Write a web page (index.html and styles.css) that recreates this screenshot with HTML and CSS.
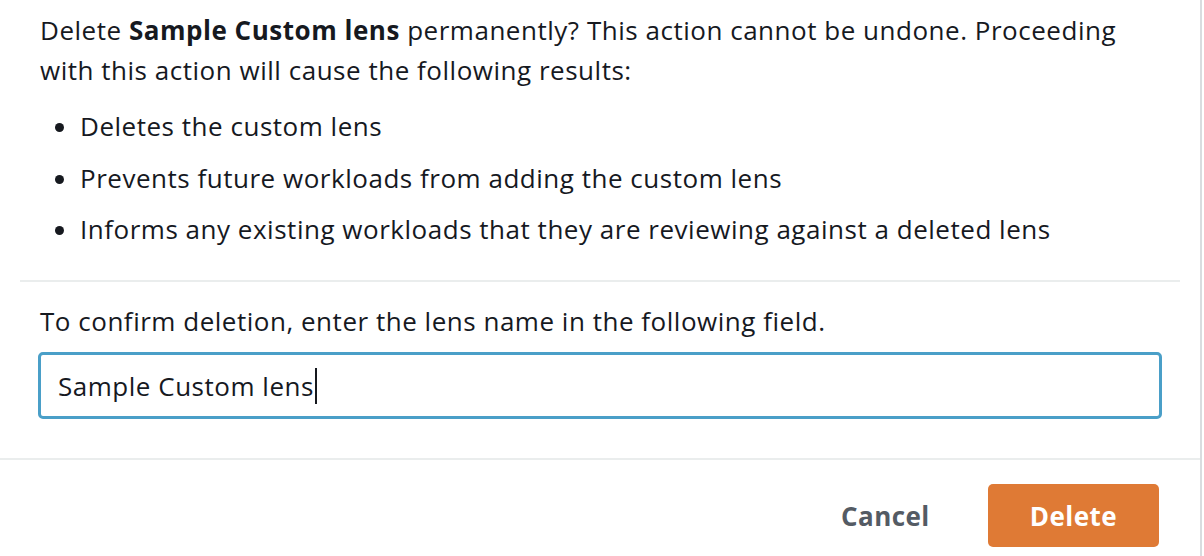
FILE: index.html
```html
<!DOCTYPE html>
<html lang="en">
<head>
<meta charset="utf-8">
<title>Delete custom lens</title>
<link rel="stylesheet" href="styles.css">
</head>
<body>
<div class="modal">
  <div class="modal-body">
    <div class="content">
      <p class="intro">Delete <strong>Sample Custom lens</strong> permanently? This action cannot be undone. Proceeding with this action will cause the following results:</p>
      <ul class="results">
        <li>Deletes the custom lens</li>
        <li>Prevents future workloads from adding the custom lens</li>
        <li>Informs any existing workloads that they are reviewing against a deleted lens</li>
      </ul>
    </div>
    <div class="divider"></div>
    <div class="content confirm">
      <label class="label" for="lens-name">To confirm deletion, enter the lens name in the following field.</label>
      <div class="input"><span class="value">Sample Custom lens</span><span class="caret"></span></div>
    </div>
  </div>
  <div class="modal-footer">
    <button class="btn btn-link">Cancel</button>
    <button class="btn btn-primary">Delete</button>
  </div>
</div>
</body>
</html>
```

FILE: styles.css
```css
html, body {
  margin: 0;
  padding: 0;
  background: #ffffff;
}

body {
  font-family: "Open Sans", "Noto Sans", sans-serif;
  font-size: 26px;
  letter-spacing: 0.52px;
  color: #16191f;
}

.modal {
  width: 1200px;
  height: 556px;
  border-right: 2px solid #d9dcdf;
  box-sizing: content-box;
  display: flex;
  flex-direction: column;
}

.modal-body {
  padding: 10px 20px 0;
}

.content {
  padding: 0 20px;
}

.intro {
  margin: 0;
  line-height: 40px;
}

.intro strong {
  font-weight: 700;
}

.results {
  margin: 16px 0 0;
  padding: 0 0 0 40px;
  line-height: 40px;
}

.results li + li {
  margin-top: 11.5px;
}

.divider {
  margin-top: 31px;
  height: 2px;
  background: #eaeded;
}

.confirm {
  padding-top: 19px;
}

.label {
  display: block;
  line-height: 40px;
}

.input {
  margin-top: 11px;
  margin-left: -2px;
  margin-right: -2px;
  height: 67px;
  box-sizing: border-box;
  border: 3px solid #4a9fc8;
  border-radius: 5px;
  padding: 0 17px;
  display: flex;
  align-items: center;
  line-height: 40px;
}

.caret {
  display: inline-block;
  width: 2px;
  height: 36px;
  background: #16191f;
  margin-left: 1px;
}

.modal-footer {
  margin-top: 39px;
  border-top: 2px solid #eaeded;
  padding: 24px 41px 0 0;
  display: flex;
  justify-content: flex-end;
  gap: 16px;
}

.btn {
  font-family: inherit;
  font-size: 26px;
  letter-spacing: 0.45px;
  font-weight: 700;
  height: 63px;
  padding: 0 42px;
  border-radius: 5px;
  border: none;
  cursor: pointer;
}

.btn-link {
  background: transparent;
  color: #545b64;
}

.btn-primary {
  background: #df7a35;
  color: #ffffff;
}
```
